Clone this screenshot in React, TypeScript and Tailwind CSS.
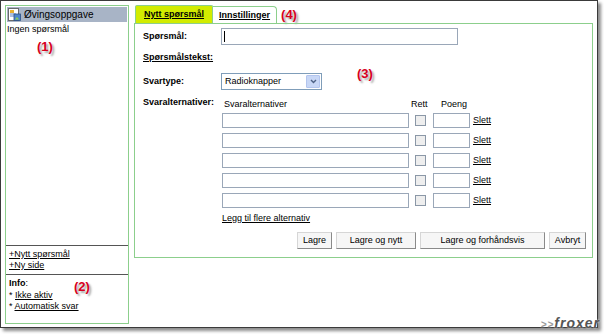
const rows = [0, 1, 2, 3, 4];

function RedMark({ label, className }: { label: string; className?: string }) {
  return (
    <span
      className={`text-[13px] font-bold leading-none text-[#d8001c] [text-shadow:2px_2px_2px_rgba(0,0,0,0.35)] ${className ?? ""}`}
    >
      {label}
    </span>
  );
}

function PageIcon() {
  return (
    <svg width="13" height="13" viewBox="0 0 13 13">
      <rect x="0.5" y="0.5" width="10" height="12" fill="#fff" stroke="#6b6b6b" />
      <rect x="2" y="2" width="4" height="3" fill="#e8b030" />
      <path d="M2 6h6M2 8h5" stroke="#5b7fbf" />
      <rect x="6" y="6" width="6.5" height="6.5" fill="#4f86c9" stroke="#2b4f86" strokeWidth="0.8" />
      <path d="M7 11.5l2-2.5 2 2.5z" fill="#8fd14f" />
    </svg>
  );
}

function TextInput({ className }: { className?: string }) {
  return <div className={`border border-[#9aa7b8] bg-white ${className ?? ""}`} />;
}

function Button({ label, width }: { label: string; width: string }) {
  return (
    <button
      className={`${width} h-[17px] border border-[#d6d6d6] border-r-[#8a8a8a] border-b-[#8a8a8a] bg-[#f6f6f6] text-[9px] text-black`}
    >
      {label}
    </button>
  );
}

export default function App() {
  return (
    <div className="relative h-[334px] w-[604px] overflow-hidden bg-white font-['Liberation_Sans',Arial,sans-serif] text-[9px] leading-[11px] text-black">
      <div className="flex h-[328px] w-[598px] gap-[5px] border border-[#3a3a3a] p-[4px] shadow-[3px_3px_3px_rgba(0,0,0,0.45)]">
        {/* venstre panel */}
        <div className="flex h-[319px] w-[124px] flex-col border border-[#8ccf8c]">
          <div className="mx-[1px] mt-[1px] flex h-[15px] items-center gap-[3px] bg-[#a8b4c6] pl-[1px]">
            <PageIcon />
            <span className="text-[10px]">Øvingsoppgave</span>
          </div>
          <div className="mt-[2px] pl-[1px]">Ingen spørsmål</div>
          <div className="mt-[5px] pl-[31px]">
            <RedMark label="(1)" />
          </div>
          <div className="flex-1" />
          <div className="border-t border-[#555]">
            <div className="mt-[3px] pl-[3px] underline">+Nytt spørsmål</div>
            <div className="pl-[3px] underline">+Ny side</div>
          </div>
          <div className="mt-[3px] border-t border-[#555] pb-[11px]">
            <div className="relative mt-[3px] pl-[3px]">
              <span className="font-bold">Info</span>:
              <RedMark label="(2)" className="absolute left-[68px] top-[2px]" />
            </div>
            <div className="mt-[1px] pl-[3px]">
              * <span className="underline">Ikke aktiv</span>
            </div>
            <div className="pl-[3px]">
              * <span className="underline">Automatisk svar</span>
            </div>
          </div>
        </div>

        {/* høyre del */}
        <div className="flex w-[459px] flex-col">
          <div className="flex h-[18px] items-end">
            <div className="ml-[1px] flex h-[18px] items-center rounded-t-[2px] border border-b-0 border-[#8ccf8c] bg-[#d2ec00] px-[8px] font-bold underline">
              Nytt spørsmål
            </div>
            <div className="flex h-[17px] items-center rounded-tr-[4px] border border-b-0 border-l-0 border-[#8ccf8c] bg-white px-[6px] font-bold underline">
              Innstillinger
            </div>
            <RedMark label="(4)" className="mb-[2px] ml-[4px]" />
          </div>
          <div className="relative flex h-[235px] flex-col border border-[#8ccf8c] pl-[8px] pr-[6px] pt-[4px]">
            <RedMark label="(3)" className="absolute left-[222px] top-[43px]" />

            <div className="flex h-[17px] items-center">
              <span className="w-[78px] font-bold">Spørsmål:</span>
              <div className="flex h-[17px] w-[237px] items-center border border-[#9aa7b8] pl-[2px]">
                <div className="h-[11px] w-px bg-black" />
              </div>
            </div>

            <div className="mt-[7px] flex h-[11px] items-center font-bold underline">Spørsmålstekst:</div>

            <div className="mt-[10px] flex h-[17px] items-center">
              <span className="w-[78px] font-bold">Svartype:</span>
              <div className="flex h-[17px] w-[101px] items-center border border-[#7f9db9] bg-white">
                <span className="flex-1 pl-[3px]">Radioknapper</span>
                <div className="m-px flex h-[13px] w-[14px] items-center justify-center rounded-[1px] border border-[#b3c5ee] bg-[#c8d7f6]">
                  <svg width="7" height="5" viewBox="0 0 7 5">
                    <path d="M1 1l2.5 2.5L6 1" fill="none" stroke="#4d6185" strokeWidth="1.4" />
                  </svg>
                </div>
              </div>
            </div>

            <div className="mt-[7px] flex">
              <span className="w-[78px] font-bold">Svaralternativer:</span>
              <div className="flex flex-col pl-[1px]">
                <div className="mt-[2px] flex h-[11px] items-center">
                  <span className="w-[189px] pl-[2px]">Svaralternativer</span>
                  <span className="w-[30px]">Rett</span>
                  <span>Poeng</span>
                </div>
                <div className="mt-[3px] flex flex-col gap-[5px]">
                  {rows.map((row) => (
                    <div key={row} className="flex h-[15px] items-center">
                      <TextInput className="h-[15px] w-[187px]" />
                      <div className="ml-[6px] h-[11px] w-[11px] border border-[#8a97a6] bg-[#eeeeee]" />
                      <TextInput className="ml-[7px] h-[15px] w-[37px]" />
                      <span className="ml-[3px] underline">Slett</span>
                    </div>
                  ))}
                </div>
                <div className="mt-[5px] underline">Legg til flere alternativ</div>
              </div>
            </div>

            <div className="mt-[8px] flex justify-end gap-[4px]">
              <Button label="Lagre" width="w-[35px]" />
              <Button label="Lagre og nytt" width="w-[80px]" />
              <Button label="Lagre og forhåndsvis" width="w-[125px]" />
              <Button label="Avbryt" width="w-[37px]" />
            </div>
          </div>
        </div>
      </div>
      <span className="absolute bottom-[1px] right-[4px] text-[14px] font-bold italic leading-[16px] tracking-[1px] text-[#555] [text-shadow:0_0_2px_#fff]">
        <span className="text-[10px] text-[#999]">&gt;&gt;</span>froxer
      </span>
    </div>
  );
}
